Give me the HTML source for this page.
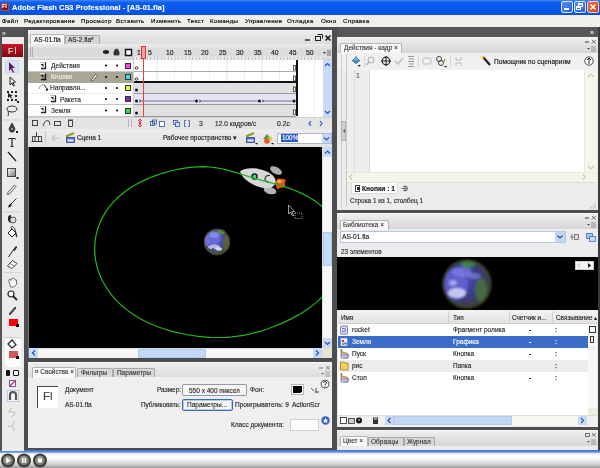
<!DOCTYPE html>
<html><head><meta charset="utf-8">
<style>
*{margin:0;padding:0;box-sizing:border-box}
html,body{width:600px;height:468px;overflow:hidden;background:#4e4e4e;font-family:"Liberation Sans",sans-serif;font-size:7px;color:#000;position:relative}
.a{position:absolute}
.t{position:absolute;white-space:nowrap;line-height:1}
.t{will-change:transform;-webkit-text-stroke:0.12px currentColor}
</style></head><body>
<!-- toolbox -->
<div class="a" style="left:0;top:26px;width:24px;height:424px;background:#e9e9e9"></div>
<!-- timeline panel -->
<div class="a" style="left:28px;top:30px;width:304px;height:99px;background:#e6e6e6"></div>
<!-- edit bar -->
<div class="a" style="left:28px;top:129px;width:304px;height:18px;background:#e8e8e8"></div>
<!-- stage -->
<div class="a" style="left:29px;top:147px;width:293px;height:200px;background:#000"></div>
<!-- properties -->
<div class="a" style="left:28px;top:362px;width:304px;height:86px;background:#ededed"></div>
<!-- right dock -->
<div class="a" style="left:337px;top:37px;width:261px;height:173px;background:#e9e9e9"></div>
<div class="a" style="left:337px;top:213px;width:261px;height:214px;background:#e9e9e9"></div>
<div class="a" style="left:337px;top:430px;width:261px;height:20px;background:#e9e9e9"></div>
<!-- taskbar -->
<div class="a" style="left:0;top:450px;width:600px;height:3px;background:linear-gradient(#3a6cc8,#6090e0 60%,#a0c0f0)"></div>
<div class="a" style="left:0;top:453px;width:600px;height:15px;background:linear-gradient(#e4e4e4 0,#ffffff 3px,#f6f6f6 6px,#d4d4d4 11px,#8c8c8c 16px)"></div>
<!-- title bar -->
<div class="a" style="left:0;top:0;width:600px;height:15px;background:linear-gradient(#4a8cf8 0,#2870f0 1px,#0c5cec 3px,#0654ea 11px,#0a50d8 15px)"></div>
<div class="a" style="left:0.5px;top:2.5px;width:8px;height:8px;background:#8c1010;border:0.5px solid #c04040"></div>
<div class="t" style="left:2px;top:3.5px;font-size:5.5px;font-weight:bold;color:#fff">Fl</div>
<div class="t" style="left:12px;top:4px;font-size:7.4px;font-weight:bold;color:#fff;letter-spacing:0.05px">Adobe Flash CS3 Professional - [AS-01.fla]</div>
<div class="a" style="left:561px;top:1px;width:12px;height:12px;border:1px solid #d8e4f8;border-radius:2px;background:linear-gradient(135deg,#5a8ef0,#2a62e0)"></div>
<div class="a" style="left:564px;top:8px;width:5px;height:2px;background:#fff"></div>
<div class="a" style="left:574px;top:1px;width:12px;height:12px;border:1px solid #d8e4f8;border-radius:2px;background:linear-gradient(135deg,#5a8ef0,#2a62e0)"></div>
<div class="a" style="left:578px;top:3px;width:5px;height:4px;border:1px solid #fff;border-top-width:2px"></div>
<div class="a" style="left:576px;top:6px;width:5px;height:4px;border:1px solid #fff;border-top-width:2px;background:#3a70e4"></div>
<div class="a" style="left:587px;top:1px;width:12px;height:12px;border:1px solid #f0d0c0;border-radius:2px;background:linear-gradient(135deg,#f07040,#d83c10)"></div>
<svg class="a" style="left:587px;top:1px" width="12" height="12"><path d="M3.5 3.5L8.5 8.5M8.5 3.5L3.5 8.5" stroke="#fff" stroke-width="1.6"/></svg>
<!-- menu bar -->
<div class="a" style="left:0;top:15px;width:600px;height:12px;background:#efefec"></div>
<div class="t" style="left:2px;top:18px;font-size:6.2px;letter-spacing:0.3px;-webkit-text-stroke:0.15px #000">Файл</div>
<div class="t" style="left:24px;top:18px;font-size:6.2px;letter-spacing:0.3px;-webkit-text-stroke:0.15px #000">Редактирование</div>
<div class="t" style="left:81px;top:18px;font-size:6.2px;letter-spacing:0.3px;-webkit-text-stroke:0.15px #000">Просмотр</div>
<div class="t" style="left:116px;top:18px;font-size:6.2px;letter-spacing:0.3px;-webkit-text-stroke:0.15px #000">Вставить</div>
<div class="t" style="left:151px;top:18px;font-size:6.2px;letter-spacing:0.3px;-webkit-text-stroke:0.15px #000">Изменить</div>
<div class="t" style="left:187px;top:18px;font-size:6.2px;letter-spacing:0.3px;-webkit-text-stroke:0.15px #000">Текст</div>
<div class="t" style="left:210px;top:18px;font-size:6.2px;letter-spacing:0.3px;-webkit-text-stroke:0.15px #000">Команды</div>
<div class="t" style="left:245px;top:18px;font-size:6.2px;letter-spacing:0.3px;-webkit-text-stroke:0.15px #000">Управление</div>
<div class="t" style="left:287px;top:18px;font-size:6.2px;letter-spacing:0.3px;-webkit-text-stroke:0.15px #000">Отладка</div>
<div class="t" style="left:321px;top:18px;font-size:6.2px;letter-spacing:0.3px;-webkit-text-stroke:0.15px #000">Окно</div>
<div class="t" style="left:343px;top:18px;font-size:6.2px;letter-spacing:0.3px;-webkit-text-stroke:0.15px #000">Справка</div>
<!-- toolbox -->
<div class="a" style="left:0;top:27px;width:24px;height:423px;background:#545454"></div>
<div class="a" style="left:1.5px;top:37px;width:22px;height:413.5px;background:#ebebeb"></div>
<div class="t" style="left:2px;top:30px;font-size:7px;font-weight:bold;color:#c8c8c8">»</div>
<div class="a" style="left:2px;top:44px;width:21px;height:13px;background:linear-gradient(#c8142a,#a00c1c 60%,#7c0a14)"></div>
<div class="t" style="left:8px;top:46.5px;font-size:8.5px;color:#f8eaea;letter-spacing:1.2px">Fl</div>
<!-- selection highlight -->
<div class="a" style="left:5px;top:60px;width:14px;height:13px;background:#d8e4f4;border:1px solid #c4d4ec;border-radius:2px"></div>
<svg class="a" style="left:0;top:56px" width="24" height="380" viewBox="0 56 24 380">
 <g fill="#222" stroke="none">
  <path d="M9 62 L9 71 L11 69 L13 73 L14 72 L12 68 L15 68 Z" fill="#5a1870"/>
  <path d="M10 77 L10 85 L12 83 L13.5 86 L14.5 85.5 L13 82.5 L15.5 82 Z" fill="none" stroke="#222" stroke-width="1"/>
  <rect x="7" y="91" width="2" height="2"/><rect x="11" y="91" width="2" height="2"/><rect x="15" y="91" width="2" height="2"/>
  <rect x="15" y="95" width="2" height="2"/><rect x="7" y="99" width="2" height="2"/><rect x="11" y="99" width="2" height="2"/><rect x="15" y="99" width="2" height="2"/>
  <path d="M8 93 L8 98 L10 96.5 L11 98.5 L12 98 L11 96 L13 96 Z"/>
  <rect x="17" y="101" width="2" height="2"/>
  <ellipse cx="12" cy="109" rx="5" ry="3" fill="none" stroke="#333" stroke-width="1"/>
  <path d="M8 111 Q9 114 8 116" fill="none" stroke="#333" stroke-width="1"/>
 </g>
 <line x1="3" y1="120" x2="21" y2="120" stroke="#d0d0d0"/>
 <g fill="#222">
  <path d="M12 123 L15 129 L13.5 132 L10.5 132 L9 129 Z" fill="#444" stroke="#222" stroke-width="0.8"/><circle cx="12" cy="129" r="0.8" fill="#eee"/>
  <rect x="16" y="131" width="2" height="2"/>
  <path d="M8.5 138 H15.5 V140 H15 V139 H12.6 V146.2 H13.8 V147 H10.2 V146.2 H11.4 V139 H9 V140 H8.5 Z"/>
  <line x1="8" y1="152" x2="16" y2="161" stroke="#222" stroke-width="1.3"/>
  <defs><linearGradient id="rg" x1="0" y1="0" x2="1" y2="1"><stop offset="0" stop-color="#fff"/><stop offset="1" stop-color="#777"/></linearGradient></defs><rect x="7.5" y="168.5" width="8" height="8" fill="url(#rg)" stroke="#444"/>
  <rect x="16.5" y="177" width="2" height="2"/>
  <path d="M8 192.5 L14.5 185 L16 186.5 L9.5 194 L7.5 194.5 Z" fill="#f4f4f4" stroke="#333" stroke-width="0.8"/>
  <path d="M16.5 198.5 L11 204" stroke="#333" stroke-width="1"/><path d="M8 207.5 Q8.5 204 11 203.5 L12 205 Q11 207.5 8 207.5Z" fill="#333"/>
 </g>
 <line x1="3" y1="212" x2="21" y2="212" stroke="#d0d0d0"/>
 <g>
  <path d="M8 217 Q9 214.5 11 215 V223 Q8.5 222.5 8 220Z" fill="#222"/><circle cx="13" cy="220" r="3" fill="#ddd" stroke="#444" stroke-width="0.9"/>
  <path d="M8 233 L12 229 L16 233 L12 237 Z" fill="#fff" stroke="#222" stroke-width="1"/><path d="M12 229 Q10 226.5 12.5 226.5 Q15 227 16 233 L17 236.5" fill="none" stroke="#222" stroke-width="0.9"/><path d="M15 233 L17 235 L16.5 238 Z" fill="#222"/>
  <path d="M8.5 257 L14 249" stroke="#222" stroke-width="1"/><path d="M13 250 L15.5 246.5 Q17 245.5 17 247.5 L14.5 251 Z" fill="#222"/>
  <path d="M7.5 266 L12.5 260.5 L17 263.5 L12 268.5 Z" fill="#fff" stroke="#333" stroke-width="0.9"/><path d="M10 263.5 L14.5 266" stroke="#333" stroke-width="0.7"/>
 </g>
 <line x1="3" y1="272.5" x2="21" y2="272.5" stroke="#d4d4d4"/>
 <g>
  <path d="M9.5 283 L8.5 280 L10 279 L11 280.5 L12 278 L14 278 L15 280 L16.5 280 L16.5 284.5 L14 287 L10.5 287 Z" fill="#fafafa" stroke="#666" stroke-width="0.9"/>
  <circle cx="11" cy="294" r="3" fill="#fff" stroke="#222" stroke-width="1.2"/>
  <line x1="13" y1="296" x2="17" y2="300" stroke="#222" stroke-width="1.8"/>
  <path d="M9 314 L15 307 L16 308 L10 315 Z" fill="#555" stroke="#333" stroke-width="0.8"/>
 </g>
</svg>
<div class="a" style="left:9px;top:319px;width:9px;height:7px;background:#f00"></div>
<div class="a" style="left:16px;top:324px;width:3px;height:3px;background:#111"></div>
<div class="a" style="left:3px;top:337px;width:18px;height:1px;background:#d4d4d4"></div>
<div class="a" style="left:5px;top:339px;width:16px;height:28px;background:#fafafa"></div>
<svg class="a" style="left:0;top:338px" width="24" height="12"><path d="M8 6 L12 2 L16 7 L12 10 Z" fill="#fff" stroke="#222" stroke-width="1.2"/></svg>
<div class="a" style="left:9px;top:351px;width:9px;height:7px;background:#d05858"></div>
<div class="a" style="left:16px;top:356px;width:3px;height:3px;background:#111"></div>

<div class="a" style="left:6px;top:370px;width:4px;height:6px;background:#111;border-radius:1px"></div>
<div class="a" style="left:13px;top:370px;width:6px;height:6px;background:#fff;border:1.5px solid #111;border-radius:1px"></div>
<div class="a" style="left:9px;top:380px;width:7px;height:7px;background:#fff;border:1px solid #8050c0"></div>
<svg class="a" style="left:9px;top:380px" width="7" height="7"><line x1="6" y1="1" x2="1" y2="6" stroke="#e02020" stroke-width="1.2"/></svg>
<div class="a" style="left:7px;top:390px;width:12px;height:12px;background:#f4f8fc;border:1px solid #b8c8dc"></div>
<svg class="a" style="left:7px;top:390px" width="12" height="12"><path d="M3 10 V5 Q3 2 6 2 Q9 2 9 5 V10" fill="none" stroke="#555" stroke-width="2.2"/></svg>
<svg class="a" style="left:5px;top:406px" width="14" height="28"><path d="M4 5 L7 2 M3 6 H9 Q11 7 9 9 L6 11" fill="none" stroke="#b8b8b8" stroke-width="1"/><path d="M3 20 H6 M10 15 L7 20 L10 25" fill="none" stroke="#b8b8b8" stroke-width="1"/></svg>
<!-- ============ TIMELINE ============ -->
<div class="a" style="left:28px;top:30px;width:304px;height:99px;background:#e2e2e2;border-top:1px solid #f4f4f4"></div>
<div class="a" style="left:28px;top:31px;width:304px;height:13px;background:linear-gradient(#ececec,#dcdcdc)"></div>
<!-- tabs -->
<div class="a" style="left:30px;top:34px;width:35px;height:11px;background:#f9f9f9;border:1px solid #b8b8b8;border-bottom:none;border-radius:2px 2px 0 0"></div>
<div class="t" style="left:34px;top:37px;font-size:6.5px;color:#111">AS-01.fla</div>
<div class="a" style="left:65px;top:35px;width:35px;height:9px;background:#d6d6d6;border:1px solid #a8a8a8;border-bottom:none;border-radius:2px 2px 0 0"></div>
<div class="t" style="left:68px;top:37px;font-size:6.5px;color:#222">AS-2.fla*</div>
<svg class="a" style="left:303px;top:33px" width="29" height="10"><path d="M2 7H7" stroke="#222" stroke-width="1.4"/><rect x="12.5" y="3.5" width="5" height="4" fill="none" stroke="#222" stroke-width="1"/><path d="M14.5 1.5H19.5V5.5" fill="none" stroke="#222" stroke-width="1"/><path d="M22.5 2.5L27.5 7.5M27.5 2.5L22.5 7.5" stroke="#111" stroke-width="1.5"/></svg>
<!-- header row -->
<div class="a" style="left:28px;top:44px;width:304px;height:16px;background:linear-gradient(#ececec,#e4e4e4 3px,#d9d9d9 5px,#dadada 12px,#e6e6e6 14px,#cfcfcf 15px)"></div>
<div class="a" style="left:30px;top:47px;width:1px;height:10px;background:#b0b0b0"></div>
<div class="a" style="left:32px;top:47px;width:1px;height:10px;background:#b0b0b0"></div>
<svg class="a" style="left:100px;top:46px" width="34" height="12"><path d="M3 5 Q6 3 9 5 L9 7 Q6 9 3 7 Z" fill="#222"/><path d="M14.5 5.5 Q14.5 3 16.5 3 Q18.5 3 18.5 5.5 M14 5.5 H19 V9 H14 Z" fill="#333" stroke="#333" stroke-width="0.8"/><rect x="25.5" y="3.5" width="6" height="6" fill="#fff" stroke="#111" stroke-width="1.5"/></svg>
<!-- ruler -->
<div class="a" style="left:133px;top:44px;width:190px;height:16px;background:linear-gradient(#ececec,#e4e4e4 3px,#dddddd 5px,#dcdcdc 12px,#e8e8e8 13px)"></div>
<div class="a" style="left:133px;top:57px;width:190px;height:3px;background:repeating-linear-gradient(90deg,#c4c4c4 0,#c4c4c4 1px,transparent 1px,transparent 3.5px)"></div>
<div class="t" style="left:137px;top:50px;font-size:6.8px;color:#111">1</div>
<div class="t" style="left:148px;top:50px;font-size:6.8px;color:#111">5</div>
<div class="t" style="left:166px;top:50px;font-size:6.8px;color:#111">10</div>
<div class="t" style="left:184px;top:50px;font-size:6.8px;color:#111">15</div>
<div class="t" style="left:201px;top:50px;font-size:6.8px;color:#111">20</div>
<div class="t" style="left:219px;top:50px;font-size:6.8px;color:#111">25</div>
<div class="t" style="left:236px;top:50px;font-size:6.8px;color:#111">30</div>
<div class="t" style="left:254px;top:50px;font-size:6.8px;color:#111">35</div>
<div class="t" style="left:271px;top:50px;font-size:6.8px;color:#111">40</div>
<div class="t" style="left:289px;top:50px;font-size:6.8px;color:#111">45</div>
<div class="t" style="left:306px;top:50px;font-size:6.8px;color:#111">50</div>
<svg class="a" style="left:322px;top:49px" width="10" height="8"><path d="M1 3H4L2.5 5Z" fill="#444"/><path d="M5 2H9M5 4H9M5 6H9" stroke="#555" stroke-width="0.8"/></svg>
<!-- layer rows (names) -->
<div class="a" style="left:28px;top:60px;width:105px;height:57px;background:#fff"></div>
<div class="a" style="left:28px;top:71px;width:105px;height:12px;background:#a8a796"></div>
<div class="a" style="left:28px;top:70.5px;width:105px;height:1px;background:#c8c8c8"></div>
<div class="a" style="left:28px;top:93px;width:105px;height:1px;border-top:1px dotted #d8d8d8"></div>
<div class="a" style="left:28px;top:104px;width:105px;height:1px;background:#c4c4c4"></div>
<div class="a" style="left:28px;top:116px;width:105px;height:1px;background:#c4c4c4"></div>
<svg class="a" style="left:28px;top:60px" width="105" height="57">
 <g>
  <path d="M12 2.5H18" stroke="#bbb" stroke-width="1"/><path d="M17.5 2.5V8.5H13" fill="none" stroke="#222" stroke-width="1.3"/><path d="M12.5 4L15.5 7V4Z" fill="#222"/>
  <path d="M12 13.5H18" stroke="#ddd" stroke-width="1"/><path d="M17.5 13.5V19.5H13" fill="none" stroke="#111" stroke-width="1.3"/><path d="M12.5 15L15.5 18V15Z" fill="#111"/>
  <path d="M22 35.5H28" stroke="#bbb" stroke-width="1"/><path d="M27.5 35.5V41.5H23" fill="none" stroke="#222" stroke-width="1.3"/><path d="M22.5 37L25.5 40V37Z" fill="#222"/>
  <path d="M12 46.5H18" stroke="#bbb" stroke-width="1"/><path d="M17.5 46.5V52.5H13" fill="none" stroke="#222" stroke-width="1.3"/><path d="M12.5 48L15.5 51V48Z" fill="#222"/>
 </g>
 <path d="M11 29 Q13 23 17 25.5" fill="none" stroke="#999" stroke-width="1"/><path d="M16 25 Q18 26 18 28" fill="none" stroke="#333" stroke-width="1"/><circle cx="19" cy="29.5" r="1.2" fill="#222"/>
 <g fill="#111"><circle cx="78" cy="5.5" r="1.1"/><circle cx="89" cy="5.5" r="1.1"/><circle cx="78" cy="17" r="1.1"/><circle cx="89" cy="17" r="1.1"/><circle cx="78" cy="28" r="1.1"/><circle cx="89" cy="28" r="1.1"/><circle cx="78" cy="39" r="1.1"/><circle cx="89" cy="39" r="1.1"/><circle cx="78" cy="50.5" r="1.1"/><circle cx="89" cy="50.5" r="1.1"/></g>
 <path d="M63 20 L68 14 L69.5 15.5 L64.5 21 Z" fill="#fff" stroke="#333" stroke-width="0.8"/>
 <rect x="97.5" y="3.5" width="5" height="5" fill="#f040f0" stroke="#333"/>
 <rect x="97.5" y="14.5" width="5" height="5" fill="#30e0f0" stroke="#333"/>
 <rect x="97.5" y="25.5" width="5" height="5" fill="#f0f020" stroke="#333"/>
 <rect x="97.5" y="36.5" width="5" height="5" fill="#8020c0" stroke="#333"/>
 <rect x="97.5" y="48.5" width="5" height="5" fill="#30e030" stroke="#333"/>
</svg>
<div class="t" style="left:51px;top:63px;font-size:6.6px;color:#222">Действия</div>
<div class="t" style="left:51px;top:74px;font-size:6.6px;color:#eeeee4">Кнопки</div>
<div class="t" style="left:50px;top:85px;font-size:6.6px;color:#222">Направля...</div>
<div class="t" style="left:60px;top:97px;font-size:6.6px;color:#222">Ракета</div>
<div class="t" style="left:51px;top:108px;font-size:6.6px;color:#222">Земля</div>
<!-- frames -->
<div class="a" style="left:133px;top:60px;width:190px;height:57px;background:#fff;background-image:repeating-linear-gradient(90deg,#f0f0f0 0,#f0f0f0 1px,transparent 1px,transparent 17.5px);background-position:6px 0"></div>
<div class="a" style="left:133px;top:82px;width:163px;height:11px;background:#e0e0e0"></div>
<div class="a" style="left:133px;top:93px;width:163px;height:12px;background:#e6e4f6"></div>
<div class="a" style="left:133px;top:105px;width:163px;height:11px;background:#e0e0e0"></div>
<div class="a" style="left:133px;top:70.5px;width:163px;height:1px;background:#aaa"></div>
<div class="a" style="left:133px;top:81px;width:163px;height:2px;background:#111"></div>
<div class="a" style="left:133px;top:92.5px;width:163px;height:1px;background:#999"></div>
<div class="a" style="left:133px;top:104px;width:163px;height:1px;background:#999"></div>
<div class="a" style="left:133px;top:115.5px;width:163px;height:1px;background:#999"></div>
<div class="a" style="left:133px;top:60px;width:1px;height:57px;background:#cfcfcf"></div>
<div class="a" style="left:296px;top:60px;width:1.5px;height:56px;background:#111"></div>
<svg class="a" style="left:133px;top:60px" width="190" height="57">
 <g fill="none" stroke="#222" stroke-width="0.9"><ellipse cx="3.5" cy="8" rx="1.5" ry="1.2"/><ellipse cx="3.5" cy="19" rx="1.5" ry="1.2"/></g>
 <g fill="#111"><circle cx="3.5" cy="30" r="1.5"/><circle cx="3.5" cy="41" r="1.5"/><circle cx="3.5" cy="53" r="1.5"/><circle cx="63.5" cy="41" r="1.5"/><circle cx="126.5" cy="41" r="1.5"/><circle cx="161" cy="41" r="1.6"/></g>
 <path d="M6 41H62M66 41H125M129 41H159" stroke="#444" stroke-width="0.7"/>
 <path d="M6 39.5L8 41L6 42.5M66 39.5L68 41L66 42.5M129 39.5L131 41L129 42.5" fill="none" stroke="#444" stroke-width="0.7"/>
 <g fill="#fff" stroke="#333" stroke-width="0.8"><rect x="160.5" y="5.5" width="2" height="4.5"/><rect x="160.5" y="16" width="2" height="4.5"/><rect x="160.5" y="27" width="2" height="4.5"/><rect x="160.5" y="50" width="2" height="4.5"/></g>
</svg>
<!-- playhead -->
<div class="a" style="left:141px;top:46px;width:5px;height:13px;background:#f4a4a0;border:1px solid #e03030"></div>
<div class="a" style="left:143px;top:59px;width:1px;height:58px;background:#e84040"></div>
<!-- v scrollbar -->
<div class="a" style="left:323px;top:60px;width:9px;height:57px;background:#c8daf8"></div>
<svg class="a" style="left:323px;top:60px" width="9" height="57"><path d="M2 6L4.5 3.5L7 6" fill="none" stroke="#3050a0" stroke-width="1.2"/><path d="M2 51L4.5 53.5L7 51" fill="none" stroke="#3050a0" stroke-width="1.2"/></svg>
<!-- status bar -->
<div class="a" style="left:28px;top:117px;width:304px;height:12px;background:#e4e4e4;border-top:1px solid #d0d0d0"></div>
<svg class="a" style="left:28px;top:117px" width="304" height="12">
 <g fill="none" stroke="#333" stroke-width="0.9"><rect x="4.5" y="3.5" width="5" height="5"/><path d="M15 9 Q17 2 21 4 L22 8"/><rect x="26.5" y="4.5" width="6" height="4"/><path d="M40.5 3.5H44.5V9.5H40.5Z M40 3H45"/></g>
 <path d="M100.5 2V10M103.5 2V10" stroke="#b8b8b8"/>
 <path d="M112 2L113 6L112 10L111 6Z" fill="#e02020"/><path d="M110 4L112 2L114 4M110 8L112 10L114 8" fill="none" stroke="#e02020" stroke-width="0.8"/>
 <g fill="#dde4f4" stroke="#3050a0" stroke-width="0.8"><rect x="122.5" y="4.5" width="4" height="4"/><rect x="124.5" y="3" width="4" height="4" fill="none"/><rect x="131.5" y="4.5" width="5" height="5" fill="#fff"/><rect x="145.5" y="3.5" width="4" height="4"/><rect x="147.5" y="5.5" width="4" height="4"/><path d="M156.5 3.5V9.5M161.5 3.5V9.5M156.5 3.5H158M156.5 9.5H158M161.5 3.5H160M161.5 9.5H160"/></g>
 <path d="M283 4L281 6.5L283 9M292 4L294 6.5L292 9" fill="none" stroke="#3050c0" stroke-width="1.2"/>
</svg>
<div class="t" style="left:199px;top:121px;font-size:6.8px;color:#222">3</div>
<div class="t" style="left:215px;top:121px;font-size:6.6px;color:#222">12.0 кадров/с</div>
<div class="t" style="left:277px;top:121px;font-size:6.8px;color:#222">0.2с</div>
<!-- ============ EDIT BAR ============ -->
<div class="a" style="left:28px;top:129px;width:304px;height:18px;background:linear-gradient(#ececec,#e2e2e2)"></div>
<svg class="a" style="left:28px;top:129px" width="304" height="18">
 <g stroke="#333" fill="none" stroke-width="0.9"><path d="M8.5 3V7M4.5 7.5H13.5M4.5 7.5V12.5H13.5V7.5M7 7.5V12.5M10.5 7.5V12.5M3.5 12.5H14.5"/></g>
 <path d="M17.5 2V16" stroke="#c8c8c8"/>
 <path d="M24 9H31M24 9L27 6M24 9L27 12" fill="none" stroke="#c4c4c4" stroke-width="1.2"/>
 <rect x="38.5" y="8.5" width="8" height="5" fill="#5a70c8" stroke="#304090" stroke-width="0.8"/>
 <rect x="39.5" y="10.5" width="6" height="2" fill="#e8ecf8"/>
 <path d="M38 7.5L46 4" stroke="#8aa020" stroke-width="2"/>
 <!-- right icons -->
 <rect x="218.5" y="8.5" width="8" height="5" fill="#5a70c8" stroke="#304090" stroke-width="0.8"/>
 <rect x="219.5" y="10.5" width="6" height="2" fill="#e8ecf8"/>
 <path d="M218 7.5L226 4" stroke="#8aa020" stroke-width="2"/>
 <path d="M227 14H230L228.5 15.5Z" fill="#111"/>
 <path d="M235 10 L239 5 L243 10 Z" fill="#50a040"/><circle cx="239" cy="12" r="2.8" fill="#e85020"/><circle cx="242" cy="9.5" r="2" fill="#e0c030"/>
 <path d="M243 14H246L244.5 15.5Z" fill="#111"/>
</svg>
<div class="t" style="left:77px;top:135px;font-size:6.4px;color:#111">Сцена 1</div>
<div class="t" style="left:163px;top:135px;font-size:6.5px;color:#111">Рабочее пространство ▾</div>
<div class="a" style="left:277px;top:132.5px;width:55px;height:11.5px;background:#fff;border:1px solid #a8b8d4"></div>
<div class="a" style="left:281px;top:134px;width:17px;height:8px;background:#2a5ac4"></div>
<div class="t" style="left:281.5px;top:135px;font-size:6.4px;color:#fff">100%</div>
<div class="a" style="left:322px;top:134px;width:9px;height:9px;background:#c4d6f4"></div>
<svg class="a" style="left:322px;top:134px" width="9" height="9"><path d="M2 3.5L4.5 6L7 3.5" fill="none" stroke="#3050a0" stroke-width="1.2"/></svg>
<!-- ============ STAGE ============ -->
<div class="a" style="left:28px;top:147px;width:1px;height:211px;background:#777"></div>
<div class="a" style="left:29px;top:147px;width:293px;height:201px;background:#000;overflow:hidden">
<svg width="293" height="201" viewBox="29 147 293 201" style="position:absolute;left:0;top:0">
 
 <defs>
  <radialGradient id="eg" cx="0.42" cy="0.42" r="0.62">
   <stop offset="0" stop-color="#6a6ad0"/><stop offset="0.5" stop-color="#4a4aa0"/><stop offset="0.8" stop-color="#4a5050"/><stop offset="1" stop-color="#3a3a18"/>
  </radialGradient>
  <filter id="bl" x="-0.2" y="-0.2" width="1.4" height="1.4"><feGaussianBlur stdDeviation="0.6"/></filter>
 </defs>
 <g filter="url(#bl)">
 <circle cx="217" cy="242" r="13.2" fill="url(#eg)"/>
 <ellipse cx="213" cy="238" rx="8" ry="7" fill="#6a6ad8" opacity="0.85"/>
 <ellipse cx="214" cy="235" rx="5" ry="3" fill="#9090f0" opacity="0.8"/>
 <ellipse cx="207" cy="241" rx="2.5" ry="5" fill="#7a7ae8" opacity="0.7"/>
 <ellipse cx="214" cy="247" rx="6" ry="2.5" fill="#d8d8ff" opacity="0.75"/>
 <ellipse cx="219" cy="249" rx="3" ry="1.8" fill="#f0f0ff" opacity="0.8"/>
 <circle cx="213" cy="249" r="1" fill="#303060"/>
 <ellipse cx="221" cy="232" rx="4" ry="2.5" fill="#5a9a40" opacity="0.75"/>
 <ellipse cx="226" cy="243" rx="3" ry="7" fill="#606a30" opacity="0.7"/>
 <circle cx="217" cy="242" r="12.6" fill="none" stroke="#4a4a22" stroke-width="1.3" opacity="0.8"/>
 </g>
 <!-- rocket -->
 <g>
  <ellipse cx="276" cy="170.5" rx="6.5" ry="3.3" transform="rotate(28 276 170.5)" fill="#b0b0b0"/>
  <ellipse cx="270" cy="190.5" rx="6.5" ry="3.5" transform="rotate(15 270 190.5)" fill="#b4b4b4"/>
  <path d="M-19 0 C-15 -6 -5 -9 5 -8.5 C13 -8 18 -5 18.5 0 C18 5 13 8 5 8.5 C-5 9 -15 6 -19 0Z" transform="translate(258 177.5) rotate(19)" fill="#d8d8d8"/>
  <path d="M276 181 Q278 177.5 281 179 Q284 178 286 180.5 Q284 183 285.5 186.5 Q283 188.5 280.5 187.5 Q278 190 276.5 188 Q275 184 276 181Z" fill="#f05018"/>
  <ellipse cx="279.5" cy="181.5" rx="2.2" ry="1.8" fill="#f8c030"/>
  <circle cx="254.5" cy="176.5" r="3.2" fill="#111"/>
  <circle cx="254.5" cy="176.5" r="1.9" fill="#40d080"/>
  <path d="M270 175.5 Q265 175 265 179.5 Q266 182.5 270 182.5" fill="none" stroke="#333" stroke-width="1.2"/>
 </g>
 <path d="M94.7 252.0 L94.8 244.1 L95.8 236.3 L97.7 228.7 L100.5 221.3 L104.2 214.4 L108.5 207.9 L113.5 201.9 L119.0 196.5 L124.8 191.7 L130.9 187.5 L137.2 183.8 L143.6 180.6 L149.9 177.8 L156.2 175.4 L162.4 173.3 L168.5 171.5 L174.6 170.0 L180.5 168.8 L186.4 167.9 L192.3 167.2 L198.1 166.8 L203.8 166.7 L209.4 167.0 L215.0 167.6 L220.5 168.5 L225.8 169.7 L231.1 171.1 L236.3 172.6 L241.4 174.2 L246.5 175.9 L251.7 177.5 L257.1 179.1 L262.7 180.6 L268.5 182.2 L274.7 183.9 L281.3 185.7 L288.1 187.9 L295.2 190.5 L302.4 193.6 L309.5 197.4 L316.5 202.0 L323.0 207.3 L328.9 213.3 L334.0 220.1 L338.1 227.5 L341.0 235.4 L342.7 243.6 L343.1 252.0 L342.3 260.3 L340.2 268.5 L337.1 276.3 L333.0 283.6 L328.1 290.4 L322.6 296.6 L316.7 302.1 L310.5 307.1 L304.1 311.5 L297.6 315.4 L291.2 318.9 L284.9 321.9 L278.7 324.6 L272.6 327.0 L266.6 329.2 L260.7 331.1 L254.8 332.7 L249.0 334.1 L243.3 335.3 L237.6 336.2 L231.9 336.9 L226.2 337.3 L220.6 337.5 L215.0 337.5 L209.4 337.3 L203.8 336.9 L198.2 336.3 L192.6 335.5 L187.0 334.6 L181.2 333.5 L175.5 332.2 L169.6 330.6 L163.7 328.8 L157.6 326.8 L151.6 324.3 L145.5 321.5 L139.4 318.3 L133.4 314.6 L127.6 310.4 L121.9 305.7 L116.5 300.6 L111.5 294.9 L107.0 288.7 L103.1 282.0 L99.8 274.9 L97.2 267.5 L95.5 259.8 L94.7 252.0Z" fill="none" stroke="#22b422" stroke-width="1.2"/>
 <!-- cursor -->
 <path d="M288.5 205 L288.5 214 L290.5 212 L292.5 216 L293.5 215.5 L291.8 211.8 L294.5 211.5 Z" fill="none" stroke="#ddd" stroke-width="0.7"/>
 <rect x="295" y="213" width="7" height="5.5" fill="none" stroke="#ccc" stroke-width="0.7" stroke-dasharray="1 1"/>
</svg>
</div>
<!-- v scroll -->
<div class="a" style="left:322px;top:147px;width:10px;height:201px;background:#f6f6f6;border-left:1px solid #ddd"></div>
<div class="a" style="left:323px;top:147px;width:9px;height:10px;background:#c8daf8"></div>
<svg class="a" style="left:323px;top:147px" width="9" height="10"><path d="M2 6.5L4.5 4L7 6.5" fill="none" stroke="#3050a0" stroke-width="1.2"/></svg>
<div class="a" style="left:323px;top:232px;width:9px;height:34px;background:#c4d8f8;border:1px solid #b0c8f0"></div>
<div class="a" style="left:323px;top:338px;width:9px;height:10px;background:#c8daf8"></div>
<svg class="a" style="left:323px;top:338px" width="9" height="10"><path d="M2 4L4.5 6.5L7 4" fill="none" stroke="#3050a0" stroke-width="1.2"/></svg>
<!-- h scroll -->
<div class="a" style="left:29px;top:348px;width:293px;height:10px;background:#f6f6f6;border-top:1px solid #ddd"></div>
<div class="a" style="left:29px;top:348px;width:9px;height:10px;background:#c8daf8"></div>
<svg class="a" style="left:29px;top:348px" width="9" height="10"><path d="M6 2.5L3.5 5L6 7.5" fill="none" stroke="#3050a0" stroke-width="1.2"/></svg>
<div class="a" style="left:138px;top:349px;width:68px;height:9px;background:#c4d8f8;border:1px solid #b0c8f0"></div>
<div class="a" style="left:313px;top:348px;width:9px;height:10px;background:#c8daf8"></div>
<svg class="a" style="left:313px;top:348px" width="9" height="10"><path d="M3 2.5L5.5 5L3 7.5" fill="none" stroke="#3050a0" stroke-width="1.2"/></svg>
<div class="a" style="left:322px;top:348px;width:10px;height:10px;background:#e8e4d4"></div>
<!-- ============ PROPERTIES ============ -->
<div class="a" style="left:28px;top:362px;width:304px;height:86px;background:#efefef;border-top:1px solid #f8f8f8"></div>
<div class="a" style="left:28px;top:363px;width:304px;height:14px;background:linear-gradient(#ececec,#dedede)"></div>
<div class="a" style="left:32px;top:366.5px;width:44px;height:11px;background:#f8f8f8;border:1px solid #b4b4b4;border-bottom:none;border-radius:2px 2px 0 0"></div>
<div class="t" style="left:35px;top:369px;font-size:6.4px;color:#333">¤ Свойства ×</div>
<div class="a" style="left:77px;top:368px;width:36px;height:9px;background:#d8d8d8;border:1px solid #a8a8a8;border-bottom:none;border-radius:2px 2px 0 0"></div>
<div class="t" style="left:81px;top:370px;font-size:6.4px;color:#333">Фильтры</div>
<div class="a" style="left:113px;top:368px;width:42px;height:9px;background:#d8d8d8;border:1px solid #a8a8a8;border-bottom:none;border-radius:2px 2px 0 0"></div>
<div class="t" style="left:117px;top:370px;font-size:6.4px;color:#333">Параметры</div>
<svg class="a" style="left:314px;top:364px" width="18" height="13"><path d="M5 4H9" stroke="#777" stroke-width="1"/><path d="M12 2L15.5 5.5M15.5 2L12 5.5" stroke="#777" stroke-width="1"/><path d="M7 9H10L8.5 10.5Z" fill="#666"/><path d="M11 8H16M11 10H16M11 12H16" stroke="#888" stroke-width="0.7"/></svg>
<!-- doc icon -->
<div class="a" style="left:37px;top:386px;width:21px;height:22px;background:#fff;border-top:1.5px solid #444;border-left:1.5px solid #444"></div>
<div class="t" style="left:43px;top:391px;font-size:11.5px;color:#444">Fl</div>
<div class="t" style="left:65px;top:387px;font-size:6.5px;color:#222">Документ</div>
<div class="t" style="left:65px;top:402px;font-size:6.5px;color:#222">AS-01.fla</div>
<div class="t" style="left:157px;top:387px;font-size:6.5px;color:#222">Размер:</div>
<div class="a" style="left:182px;top:383.5px;width:65px;height:12px;background:#f6f6f2;border:1px solid #8a9ab4;border-radius:2px"></div>
<div class="t" style="left:189px;top:387.5px;font-size:6.5px;color:#222">550 x 400 пиксел</div>
<div class="t" style="left:250px;top:387px;font-size:6.5px;color:#222">Фон:</div>
<div class="a" style="left:291px;top:384px;width:13px;height:11px;background:#fff;border:1px solid #bbb"></div>
<div class="a" style="left:293px;top:386px;width:9px;height:7px;background:#000"></div>
<div class="a" style="left:299px;top:391px;width:4px;height:3px;background:#fff;clip-path:polygon(0 100%,100% 0,100% 100%)"></div>
<svg class="a" style="left:310px;top:386px" width="10" height="8"><path d="M1 2L4 5M5 6H9M6 2V7" stroke="#444" stroke-width="0.9" fill="none"/></svg>
<svg class="a" style="left:320px;top:379px" width="11" height="10"><circle cx="5" cy="5" r="4" fill="#fff" stroke="#444" stroke-width="0.9"/><path d="M3.5 4Q3.5 2.5 5 2.5Q6.5 2.5 6.5 4Q6.5 5 5 5.5V6.5" fill="none" stroke="#222" stroke-width="0.9"/><circle cx="5" cy="7.8" r="0.5" fill="#222"/></svg>
<div class="t" style="left:141px;top:402px;font-size:6.4px;color:#222">Публиковать:</div>
<div class="a" style="left:182px;top:398.5px;width:51px;height:12px;background:#f6f6f2;border:1px solid #3a6ab4;border-radius:2px;box-shadow:inset 0 0 0 1px #b8cce8"></div>
<div class="t" style="left:187px;top:402px;font-size:6.5px;color:#222">Параметры...</div>
<div class="t" style="left:235px;top:402px;font-size:6.5px;color:#222">Проигрыватель: 9</div>
<div class="t" style="left:292px;top:402px;font-size:6.5px;color:#222">ActionScr</div>
<div class="t" style="left:231px;top:422px;font-size:6.5px;color:#222">Класс документа:</div>
<div class="a" style="left:290px;top:419px;width:29px;height:12px;background:#fff;border:1px solid #c8d0dc"></div>
<svg class="a" style="left:320px;top:414.5px" width="11" height="11"><circle cx="5.5" cy="5.5" r="4.2" fill="#2a60c8"/><path d="M5.5 2.5L6.3 4.7L8.5 4.7L6.8 6L7.5 8.3L5.5 7L3.5 8.3L4.2 6L2.5 4.7L4.7 4.7Z" fill="#fff"/></svg>
<!-- ============ RIGHT DOCK ============ -->
<div class="a" style="left:337px;top:27px;width:263px;height:10px;background:#575757"></div>
<div class="t" style="left:590px;top:29px;font-size:7px;font-weight:bold;color:#ddd">»</div>
<div class="a" style="left:598px;top:27px;width:2px;height:423px;background:#3a3a3a"></div>
<!-- actions panel -->
<div class="a" style="left:337px;top:37px;width:261px;height:173px;background:#ececec;border-top:1px solid #f6f6f6"></div>
<div class="a" style="left:337px;top:38px;width:261px;height:15px;background:linear-gradient(#eeeeee,#d6d6d6)"></div>
<div class="a" style="left:340px;top:43px;width:62px;height:10px;background:#f8f8f8;border:1px solid #b4b4b4;border-bottom:none;border-radius:2px 2px 0 0"></div>
<div class="t" style="left:344px;top:45px;font-size:6.5px;color:#333">Действия - кадр ×</div>
<svg class="a" style="left:582px;top:38px" width="16" height="15"><path d="M3 4H7" stroke="#555" stroke-width="1.2"/><path d="M10 2L13.5 5.5M13.5 2L10 5.5" stroke="#666" stroke-width="1"/><path d="M5 10H8L6.5 11.5Z" fill="#444"/><path d="M9 9H14M9 11H14M9 13H14" stroke="#777" stroke-width="0.7"/></svg>
<div class="a" style="left:337px;top:53px;width:261px;height:17px;background:#f0f0f0"></div>
<svg class="a" style="left:337px;top:53px" width="261" height="17">
 <path d="M15.5 7.5L19 4L22.5 7.5L19 11Z" fill="#60b0e8" stroke="#2a6aa8" stroke-width="0.7"/><path d="M18 3.5H20V5H18Z" fill="#4a8ac8"/><path d="M15 7.5Q19 10 23 7.5" fill="none" stroke="#2a5a90" stroke-width="0.8"/><path d="M20.5 12H24L22.2 13.8Z" fill="#111"/>
 <path d="M27.5 3V15" stroke="#d4d4d4"/>
 <circle cx="34" cy="7" r="3" fill="none" stroke="#aaa" stroke-width="1"/><path d="M32 9L29.5 12" stroke="#aaa" stroke-width="1.2"/>
 <circle cx="49" cy="8" r="3.8" fill="none" stroke="#222" stroke-width="1.2"/><path d="M49 3V13M44 8H54" stroke="#222" stroke-width="1"/>
 <path d="M58 8L61 11L66 5" fill="none" stroke="#c0c0c0" stroke-width="1.6"/>
 <path d="M71 3.5H77M72 6H77M71 8.5H77M72 11H77M71 13.5H77" stroke="#999" stroke-width="1"/>
 <path d="M81.5 3V15" stroke="#d4d4d4"/>
 <rect x="86" y="5" width="8" height="6" rx="1" fill="none" stroke="#bbb"/>
 <circle cx="102" cy="6" r="2.5" fill="none" stroke="#444"/><circle cx="104" cy="10" r="2.5" fill="none" stroke="#444"/><path d="M106 10L108 6" stroke="#9a8a20" stroke-width="1.2"/><path d="M107 13H110L108.5 14.5Z" fill="#111"/>
 <path d="M113.5 3V15" stroke="#d4d4d4"/>
 <path d="M119 4V7M124 4V7M119 10V13M124 10V13M119 7H124M119 10H124" stroke="#bbb" stroke-width="1"/>
 <path d="M146 4L153 12" stroke="#222" stroke-width="2.2"/><path d="M144 3L147 5L145 6Z" fill="#f0d020"/><circle cx="145" cy="4" r="1.6" fill="#f8e040"/>
 <circle cx="252" cy="8" r="4.2" fill="#fff" stroke="#333" stroke-width="0.9"/><path d="M252 5V11M250 7L252 5L254 7" fill="none" stroke="#222" stroke-width="1"/>
</svg>
<div class="t" style="left:494px;top:59px;font-size:6.6px;color:#111">Помощник по сценариям</div>
<!-- code area -->
<div class="a" style="left:341px;top:54px;width:1px;height:153px;background:#cfcfcf"></div>
<div class="a" style="left:341px;top:121px;width:5px;height:20px;background:#d0d0d0;border:1px solid #b0b0b0"></div>
<svg class="a" style="left:342px;top:128px" width="4" height="6"><path d="M3 1L1 3L3 5Z" fill="#555"/></svg>

<div class="a" style="left:347px;top:70px;width:23px;height:102px;background:#eeeeec;border-right:1px solid #d8d8d8"></div>
<div class="a" style="left:354px;top:70px;width:1px;height:102px;border-left:1px dotted #c8c8c8"></div>
<div class="t" style="left:356px;top:73px;font-size:6.8px;color:#555">1</div>
<div class="a" style="left:370px;top:70px;width:214px;height:102px;background:#fff"></div>
<div class="a" style="left:584px;top:70px;width:13px;height:102px;background:#f6f6ee;border-left:1px solid #e8e8e0"></div>
<svg class="a" style="left:585px;top:71px" width="12" height="10"><path d="M3 6L6 3L9 6" fill="none" stroke="#c8c8a8" stroke-width="1.2"/></svg>
<svg class="a" style="left:585px;top:162px" width="12" height="10"><path d="M3 4L6 7L9 4" fill="none" stroke="#c8c8a8" stroke-width="1.2"/></svg>
<div class="a" style="left:346px;top:172px;width:251px;height:10px;background:#f4f4ea;border-top:1px solid #e8e8dc"></div>
<div class="a" style="left:346px;top:182px;width:251px;height:1px;background:#e0e0d0"></div>
<svg class="a" style="left:346px;top:172px" width="251" height="10"><path d="M6 2.5L3.5 5L6 7.5M237 2.5L239.5 5L237 7.5" fill="none" stroke="#c8c8a8" stroke-width="1.1"/></svg>
<div class="a" style="left:351px;top:183px;width:47px;height:11px;background:#fff;border:1px solid #ddd;border-top:none"></div>
<div class="a" style="left:355px;top:185px;width:5px;height:7px;background:#fff;border:1px solid #444"></div>
<div class="a" style="left:356.5px;top:187px;width:2px;height:3px;background:#222"></div>
<div class="t" style="left:362px;top:186px;font-size:6.6px;font-weight:bold;color:#111">Кнопки : 1</div>
<svg class="a" style="left:400px;top:184px" width="9" height="9"><path d="M1 4.5H8M5 1.5V7.5M3 2.5H7V6.5H3" fill="none" stroke="#555" stroke-width="0.8"/></svg>
<div class="t" style="left:350px;top:198px;font-size:6.4px;color:#222">Строка 1 из 1, столбец 1</div>
<svg class="a" style="left:589px;top:202px" width="8" height="7"><path d="M7 1L1 7M7 4L4 7" stroke="#aaa" stroke-width="0.8"/></svg>
<div class="a" style="left:346px;top:54px;width:1px;height:153px;background:#c8c8c8"></div>
<!-- library panel -->
<div class="a" style="left:337px;top:213px;width:261px;height:214px;background:#ececec;border-top:1px solid #f6f6f6"></div>
<div class="a" style="left:337px;top:214px;width:261px;height:15px;background:linear-gradient(#eeeeee,#d6d6d6)"></div>
<div class="a" style="left:340px;top:219.5px;width:49px;height:10px;background:#f8f8f8;border:1px solid #b4b4b4;border-bottom:none;border-radius:2px 2px 0 0"></div>
<div class="t" style="left:343px;top:222px;font-size:6.5px;color:#333">Библиотека ×</div>
<svg class="a" style="left:582px;top:214px" width="16" height="15"><path d="M3 4H7" stroke="#555" stroke-width="1.2"/><path d="M10 2L13.5 5.5M13.5 2L10 5.5" stroke="#666" stroke-width="1"/><path d="M5 10H8L6.5 11.5Z" fill="#444"/><path d="M9 9H14M9 11H14M9 13H14" stroke="#777" stroke-width="0.7"/></svg>
<div class="a" style="left:340px;top:231px;width:226px;height:12px;background:#fff;border:1px solid #b8c4d8"></div>
<div class="t" style="left:342px;top:234px;font-size:6.6px;color:#111">AS-01.fla</div>
<div class="a" style="left:555px;top:232px;width:10px;height:10px;background:#c4d6f4"></div>
<svg class="a" style="left:555px;top:232px" width="10" height="10"><path d="M2.5 3.5L5 6L7.5 3.5" fill="none" stroke="#3050a0" stroke-width="1.2"/></svg>
<svg class="a" style="left:568px;top:231px" width="30" height="12"><path d="M2 6H6M4 3V9" stroke="#666" stroke-width="0.8"/><rect x="6.5" y="3.5" width="4" height="5" fill="#ddd" stroke="#555" stroke-width="0.7"/><rect x="18.5" y="2.5" width="6" height="5" fill="#a8c8f0" stroke="#3060b0" stroke-width="0.7"/><rect x="21.5" y="5.5" width="6" height="5" fill="#c8dcf8" stroke="#3060b0" stroke-width="0.7"/></svg>
<div class="t" style="left:341px;top:249px;font-size:6.4px;color:#222">23 элементов</div>
<!-- preview -->
<div class="a" style="left:337px;top:257px;width:261px;height:53px;background:#000;overflow:hidden">
 <svg width="261" height="53" viewBox="337 257 261 53">
  <defs><filter id="bl2" x="-0.2" y="-0.2" width="1.4" height="1.4"><feGaussianBlur stdDeviation="0.9"/></filter><radialGradient id="eg2" cx="0.45" cy="0.45" r="0.6"><stop offset="0" stop-color="#5050a8"/><stop offset="0.5" stop-color="#3a3a88"/><stop offset="0.8" stop-color="#3a4050"/><stop offset="1" stop-color="#2a2a10"/></radialGradient></defs>
  <g filter="url(#bl2)">
  <circle cx="467" cy="284" r="24.5" fill="url(#eg2)"/>
  <ellipse cx="456" cy="284" rx="12" ry="16" fill="#6464d8" opacity="0.8"/>
  <ellipse cx="462" cy="272" rx="10" ry="5" fill="#8080ec" opacity="0.7"/>
  <ellipse cx="474" cy="276" rx="7" ry="3" fill="#9090f0" opacity="0.55"/>
  <ellipse cx="457" cy="293" rx="9" ry="5" fill="#e0e0ff" opacity="0.8"/>
  <ellipse cx="453" cy="283" rx="4" ry="3" fill="#c0c0ff" opacity="0.7"/>
  <ellipse cx="468" cy="264" rx="7" ry="4" fill="#40a040" opacity="0.7"/>
  <ellipse cx="481" cy="290" rx="6" ry="12" fill="#4a7a3a" opacity="0.75"/>
  <circle cx="467" cy="284" r="23.5" fill="none" stroke="#40401a" stroke-width="2.2" opacity="0.85"/>
  </g>
 </svg>
</div>
<div class="a" style="left:575px;top:261px;width:19px;height:9px;background:#f4f4f4;border:1px solid #ccc"></div>
<svg class="a" style="left:575px;top:261px" width="19" height="9"><path d="M5 2.5L3 4.5L5 6.5" fill="none" stroke="#aaa"/><path d="M13 2V7L16 4.5Z" fill="#111"/></svg>
<!-- list -->
<div class="a" style="left:338px;top:310px;width:259px;height:14px;background:linear-gradient(#f4f4f4,#e2e2e2);border-bottom:1px solid #d0d0d0"></div>
<div class="a" style="left:448px;top:311px;width:1px;height:13px;background:#d0d0d0"></div>
<div class="a" style="left:509px;top:311px;width:1px;height:13px;background:#d0d0d0"></div>
<div class="a" style="left:552px;top:311px;width:1px;height:13px;background:#d0d0d0"></div>
<div class="t" style="left:341px;top:315px;font-size:6.4px;color:#222">Имя</div>
<div class="t" style="left:453px;top:315px;font-size:6.4px;color:#222">Тип</div>
<div class="t" style="left:512px;top:315px;font-size:6.4px;color:#222">Счетчик и...</div>
<div class="t" style="left:556px;top:315px;font-size:6.4px;color:#222">Связывание ▴</div>
<div class="a" style="left:338px;top:324px;width:250px;height:103px;background:#fff"></div>
<div class="a" style="left:338px;top:336px;width:250px;height:12px;background:#3a6cc8"></div>
<div class="a" style="left:338px;top:360px;width:250px;height:12px;background:#ececec"></div>
<div class="t" style="left:352px;top:327px;font-size:6.5px;color:#222">rocket</div>
<div class="t" style="left:352px;top:339px;font-size:6.5px;color:#fff">Земля</div>
<div class="t" style="left:352px;top:351px;font-size:6.5px;color:#222">Пуск</div>
<div class="t" style="left:352px;top:363px;font-size:6.5px;color:#222">рис</div>
<div class="t" style="left:352px;top:375px;font-size:6.5px;color:#222">Стоп</div>
<div class="t" style="left:453px;top:327px;font-size:6.5px;color:#222">Фрагмент ролика</div>
<div class="t" style="left:453px;top:339px;font-size:6.5px;color:#fff">Графика</div>
<div class="t" style="left:453px;top:351px;font-size:6.5px;color:#222">Кнопка</div>
<div class="t" style="left:453px;top:363px;font-size:6.5px;color:#222">Папка</div>
<div class="t" style="left:453px;top:375px;font-size:6.5px;color:#222">Кнопка</div>
<svg class="a" style="left:338px;top:324px" width="250" height="60">
 <rect x="2.5" y="2" width="7" height="8" rx="1" fill="#e0e0f8" stroke="#6060b0" stroke-width="0.8"/><path d="M4 5Q6 3 8 6Q6 9 4 7" fill="none" stroke="#4040a0" stroke-width="0.8"/>
 <rect x="2.5" y="14" width="7" height="8" rx="1" fill="#fff" stroke="#6080c0" stroke-width="0.8"/><circle cx="5" cy="17" r="1.2" fill="#e02020"/><circle cx="7.5" cy="19.5" r="1.2" fill="#2060e0"/><circle cx="5" cy="20" r="1" fill="#20a020"/>
 <path d="M3 25V31Q3 34 6 34H10L10 30Q8 28 5 29Z" fill="#d8c8a8" stroke="#806030" stroke-width="0.8"/><rect x="3" y="31" width="7" height="3" fill="#c8c8f0" stroke="#6060a0" stroke-width="0.6"/>
 <path d="M2.5 38H6L7 39H10V46H2.5Z" fill="#f0d060" stroke="#a08020" stroke-width="0.8"/>
 <path d="M3 49V55Q3 58 6 58H10L10 54Q8 52 5 53Z" fill="#d8c8a8" stroke="#806030" stroke-width="0.8"/><rect x="3" y="55" width="7" height="3" fill="#c8c8f0" stroke="#6060a0" stroke-width="0.6"/>
 <g fill="#333"><rect x="191" y="6" width="2" height="1"/><rect x="191" y="30" width="2" height="1"/><rect x="191" y="54" width="2" height="1"/><rect x="217.5" y="4" width="1" height="1.2"/><rect x="217.5" y="7" width="1" height="1.2"/><rect x="217.5" y="28" width="1" height="1.2"/><rect x="217.5" y="31" width="1" height="1.2"/><rect x="217.5" y="40" width="1" height="1.2"/><rect x="217.5" y="43" width="1" height="1.2"/><rect x="217.5" y="52" width="1" height="1.2"/><rect x="217.5" y="55" width="1" height="1.2"/></g>
 <g fill="#fff"><rect x="191" y="18" width="2" height="1"/><rect x="217.5" y="16" width="1" height="1.2"/><rect x="217.5" y="19" width="1" height="1.2"/></g>
</svg>
<div class="a" style="left:588px;top:324px;width:9px;height:91px;background:#f8f8f8"></div>
<div class="a" style="left:589px;top:326px;width:7px;height:7px;background:#fff;border:1px solid #333"></div>
<div class="a" style="left:590px;top:336px;width:4px;height:7px;background:#fff;border:1px solid #333"></div>
<svg class="a" style="left:587px;top:344px" width="10" height="8"><path d="M2 6L5 3L8 6" fill="none" stroke="#ddd" stroke-width="1"/></svg>
<div class="a" style="left:338px;top:415px;width:259px;height:12px;background:#f0f0f0;border-top:1px solid #ddd"></div>
<svg class="a" style="left:338px;top:415px" width="60" height="11"><rect x="2.5" y="2.5" width="6" height="6" fill="#fff" stroke="#222" stroke-width="0.8"/><rect x="10.5" y="3.5" width="6" height="5" fill="#ccc" stroke="#333" stroke-width="0.8"/><circle cx="21" cy="5.5" r="3" fill="#111"/><path d="M21 4V6" stroke="#fff" stroke-width="1"/><rect x="35" y="2.5" width="5" height="6.5" fill="#333"/><rect x="36" y="3.5" width="3" height="1" fill="#fff"/></svg>
<div class="a" style="left:385px;top:416px;width:8px;height:9px;background:#c8daf8"></div>
<svg class="a" style="left:385px;top:416px" width="8" height="9"><path d="M5.5 2L3 4.5L5.5 7" fill="none" stroke="#3050a0" stroke-width="1.2"/></svg>
<div class="a" style="left:393px;top:416px;width:119px;height:9px;background:#c4d6f6;border:1px solid #b4c8ec"></div>
<div class="a" style="left:512px;top:416px;width:66px;height:9px;background:#f8f8f2"></div>
<div class="a" style="left:578px;top:416px;width:9px;height:9px;background:#c8daf8"></div>
<svg class="a" style="left:578px;top:416px" width="9" height="9"><path d="M3 2L5.5 4.5L3 7" fill="none" stroke="#3050a0" stroke-width="1.2"/></svg>
<div class="a" style="left:588px;top:408px;width:9px;height:7px;background:#eeeee0"></div>
<!-- color panel tabs -->
<div class="a" style="left:337px;top:430px;width:261px;height:20px;background:#ececec;border-top:1px solid #f6f6f6"></div>
<div class="a" style="left:337px;top:431px;width:261px;height:15px;background:linear-gradient(#eeeeee,#d6d6d6)"></div>
<div class="a" style="left:340px;top:436px;width:28px;height:10px;background:#f8f8f8;border:1px solid #b4b4b4;border-bottom:none;border-radius:2px 2px 0 0"></div>
<div class="t" style="left:343px;top:438px;font-size:6.5px;color:#333">Цвет ×</div>
<div class="a" style="left:368px;top:437px;width:36px;height:9px;background:#d8d8d8;border:1px solid #a8a8a8;border-bottom:none"></div>
<div class="t" style="left:371px;top:439px;font-size:6.5px;color:#333">Образцы</div>
<div class="a" style="left:404px;top:437px;width:31px;height:9px;background:#d8d8d8;border:1px solid #a8a8a8;border-bottom:none"></div>
<div class="t" style="left:407px;top:439px;font-size:6.5px;color:#333">Журнал</div>
<svg class="a" style="left:582px;top:431px" width="16" height="15"><rect x="3.5" y="2.5" width="4" height="3" fill="none" stroke="#555" stroke-width="0.8"/><path d="M10 2L13.5 5.5M13.5 2L10 5.5" stroke="#666" stroke-width="1"/><path d="M5 10H8L6.5 11.5Z" fill="#444"/><path d="M9 9H14M9 11H14M9 13H14" stroke="#777" stroke-width="0.7"/></svg>
<!-- taskbar buttons -->
<svg class="a" style="left:0;top:452.5px" width="60" height="16">
 <defs><radialGradient id="bg1" cx="0.45" cy="0.4" r="0.6"><stop offset="0" stop-color="#b8b8b0"/><stop offset="1" stop-color="#6a6a60"/></radialGradient></defs>
 <g><circle cx="8" cy="7.5" r="7" fill="#3e3e36"/><circle cx="8" cy="7.5" r="5" fill="url(#bg1)"/><path d="M6.3 4.5V10.5L10.8 7.5Z" fill="#fff"/></g>
 <g><circle cx="24" cy="7.5" r="7" fill="#3e3e36"/><circle cx="24" cy="7.5" r="5" fill="url(#bg1)"/><rect x="22" y="5" width="1.4" height="5" fill="#fff"/><rect x="24.7" y="5" width="1.4" height="5" fill="#fff"/></g>
 <g><circle cx="40" cy="7.5" r="7" fill="#3e3e36"/><circle cx="40" cy="7.5" r="5" fill="url(#bg1)"/><rect x="38" y="5.5" width="4" height="4" fill="#fff"/></g>
</svg>
</body></html>
